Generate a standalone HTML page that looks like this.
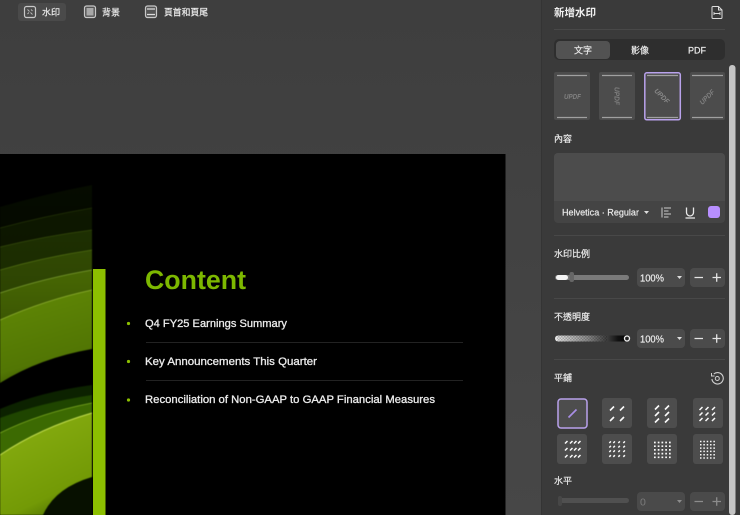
<!DOCTYPE html>
<html><head><meta charset="utf-8"><style>
html,body{margin:0;padding:0;background:#414141;width:740px;height:515px;overflow:hidden}
svg{display:block;filter:blur(.35px)}
svg svg{filter:blur(.5px)}
text{font-family:"Liberation Sans","Noto Sans CJK TC",sans-serif;fill:#ececec;stroke:#ececec;stroke-width:.18}
</style></head><body>
<svg width="740" height="515" viewBox="0 0 740 515" xmlns="http://www.w3.org/2000/svg">
<defs>
<linearGradient id="bgG" x1="0" y1="0" x2="0" y2="1"><stop offset="0" stop-color="#3e3e3e"/><stop offset="1" stop-color="#474747"/></linearGradient>
<linearGradient id="op" x1="0" y1="0" x2="1" y2="0"><stop offset="0" stop-color="#e8e8e8"/><stop offset=".45" stop-color="#8a8a8a"/><stop offset=".85" stop-color="#111"/><stop offset="1" stop-color="#000"/></linearGradient>
<linearGradient id="u1" x1="0" y1="0" x2="0" y2="1"><stop offset="0" stop-color="#060c00"/><stop offset="1" stop-color="#020300"/></linearGradient>
<linearGradient id="u2" x1="0" y1="0" x2="0" y2="1"><stop offset="0" stop-color="#0e1800"/><stop offset="1" stop-color="#0a1200"/></linearGradient>
<linearGradient id="u3" x1="0" y1="0" x2="0" y2="1"><stop offset="0" stop-color="#1e3002"/><stop offset="1" stop-color="#162400"/></linearGradient>
<linearGradient id="u4" x1="0" y1="0" x2="0" y2="1"><stop offset="0" stop-color="#324a04"/><stop offset="1" stop-color="#263a00"/></linearGradient>
<linearGradient id="u5" x1="0" y1="0" x2="0" y2="1"><stop offset="0" stop-color="#486804"/><stop offset="1" stop-color="#364f02"/></linearGradient>
<linearGradient id="u6" gradientUnits="userSpaceOnUse" x1="30" y1="295" x2="55" y2="380"><stop offset="0" stop-color="#5f8606"/><stop offset=".75" stop-color="#527604"/><stop offset="1" stop-color="#3a5402"/></linearGradient>
<linearGradient id="l4" gradientUnits="userSpaceOnUse" x1="30" y1="420" x2="75" y2="512"><stop offset="0" stop-color="#86ac10"/><stop offset=".75" stop-color="#739a06"/><stop offset="1" stop-color="#4c6e02"/></linearGradient>
<pattern id="chk" width="3" height="3" patternUnits="userSpaceOnUse"><rect width="1.500" height="1.500" fill="#000"/><rect x="1.500" y="1.500" width="1.500" height="1.500" fill="#000"/></pattern>
</defs>

<rect width="740" height="515" fill="url(#bgG)"/>

<!-- toolbar -->
<rect x="18" y="3" width="48" height="18" rx="3" fill="#4a4a4a"/>
<rect x="24.500" y="6.500" width="11" height="11" rx="2" fill="#4a4a4a" stroke="#c8c8c8" stroke-width="1.200"/>
<path d="M27.500 9.500l2 2M31 9.500l1.500 1.500M27.500 14l1.500-1.500M30.500 12.500l2 2" stroke="#bbb" stroke-width=".9" fill="none"/>
<text x="42" y="15.500" font-size="9" textLength="18" lengthAdjust="spacingAndGlyphs">水印</text>
<rect x="84.500" y="6" width="11" height="11.500" rx="2" fill="#555" stroke="#c8c8c8" stroke-width="1.200"/>
<rect x="86.500" y="8" width="7" height="7.500" fill="#a8a8a8"/>
<text x="102" y="15.500" font-size="9" textLength="18" lengthAdjust="spacingAndGlyphs">背景</text>
<rect x="145.500" y="6" width="11" height="11.500" rx="2" fill="#555" stroke="#c8c8c8" stroke-width="1.200"/>
<path d="M147 9h8M147 14.500h8" stroke="#ddd" stroke-width="1.300"/>
<text x="164" y="15.500" font-size="9" textLength="44" lengthAdjust="spacingAndGlyphs">頁首和頁尾</text>

<!-- slide -->
<rect x="0" y="154" width="505.500" height="361" fill="#000"/>
<!-- artwork -->
<svg x="0" y="154" width="92" height="361" viewBox="0 154 92 361">
<path d="M0 207Q45 194 92 185V340H0Z" fill="url(#u1)"/>
<path d="M0 228Q45 216 92 208V340H0Z" fill="url(#u2)"/>
<path d="M0 247Q45 236 92 230V340H0Z" fill="url(#u3)"/>
<path d="M0 270Q45 257 92 250V345H0Z" fill="url(#u4)"/>
<path d="M0 293Q45 278 92 270V345H0Z" fill="url(#u5)"/>
<path d="M0 320Q45 300 92 290V349Q40 358 0 383Z" fill="url(#u6)"/>
<path d="M0 293Q45 278 92 270" fill="none" stroke="#7a9c30" stroke-width=".7"/>
<path d="M0 320Q45 300 92 290" fill="none" stroke="#8fb030" stroke-width=".8"/>
<path d="M0 270Q45 257 92 250" fill="none" stroke="#5f7e18" stroke-width=".6"/>
<path d="M0 247Q45 236 92 230" fill="none" stroke="#425a10" stroke-width=".6"/>
<path d="M0 228Q45 216 92 208" fill="none" stroke="#2e400a" stroke-width=".6"/>
<path d="M0 409Q40 392 92 385V515H0Z" fill="#0c2200"/>
<path d="M0 418Q40 403 92 395V515H0Z" fill="#1f4500"/>
<path d="M0 433Q40 413 92 403V515H0Z" fill="#3c6a02"/>
<path d="M0 455Q40 428 92 413V477Q55 488 43 515H0Z" fill="url(#l4)"/>
<path d="M0 455Q40 428 92 413" fill="none" stroke="#c4de50" stroke-width="1"/>
<path d="M0 433Q40 413 92 403" fill="none" stroke="#7ca820" stroke-width=".7"/>
<path d="M43 515Q55 488 92 477V515Z" fill="#071000"/>
</svg>
<rect x="93" y="269" width="12.500" height="246" fill="#8cbf00"/>

<text x="145" y="289" font-size="26.500" font-weight="700" style="fill:#7db800;stroke:none" textLength="101" lengthAdjust="spacingAndGlyphs">Content</text>
<circle cx="128.500" cy="323.500" r="1.600" fill="#8cbf00"/>
<circle cx="128.500" cy="361.500" r="1.600" fill="#8cbf00"/>
<circle cx="128.500" cy="400" r="1.600" fill="#8cbf00"/>
<g style="font-weight:400">
<text x="145" y="327" font-size="11" textLength="142" lengthAdjust="spacingAndGlyphs" style="stroke-width:.3">Q4 FY25 Earnings Summary</text>
<text x="145" y="365" font-size="11" textLength="172" lengthAdjust="spacingAndGlyphs" style="stroke-width:.3">Key Announcements This Quarter</text>
<text x="145" y="403" font-size="11" textLength="290" lengthAdjust="spacingAndGlyphs" style="stroke-width:.3">Reconciliation of Non-GAAP to GAAP Financial Measures</text>
</g>
<rect x="146" y="342" width="317" height="1" fill="#222"/>
<rect x="146" y="380" width="317" height="1" fill="#222"/>

<!-- panel -->
<rect x="541" y="0" width="199" height="515" fill="#3a3a3a"/>
<rect x="541" y="0" width="1" height="515" fill="#343434"/>
<text x="554" y="16" font-size="10.500" font-weight="700" style="fill:#f0f0f0;stroke:none" textLength="42" lengthAdjust="spacingAndGlyphs">新增水印</text>
<path d="M713 6.500h5.500l3.500 3.500v7.500a1 1 0 0 1-1 1h-8a1 1 0 0 1-1-1v-10a1 1 0 0 1 1-1zM718.500 6.500v3.500h3.500" fill="none" stroke="#ddd" stroke-width="1"/>
<path d="M714 13.500h6M714 12v3M720 12v3" stroke="#ddd" stroke-width=".9" fill="none"/>
<rect x="554" y="29" width="171" height="1" fill="#484848"/>

<rect x="554" y="39" width="171" height="21" rx="5" fill="#2e2e2e"/>
<rect x="556" y="41" width="54" height="18" rx="4" fill="#525252"/>
<text x="574" y="53.500" font-size="9" textLength="18" lengthAdjust="spacingAndGlyphs">文字</text>
<text x="631" y="53.500" font-size="9" textLength="18" lengthAdjust="spacingAndGlyphs">影像</text>
<text x="688" y="53.500" font-size="9" textLength="18" lengthAdjust="spacingAndGlyphs">PDF</text>

<!-- thumbnails -->
<g fill="#4c4c4c">
<rect x="554" y="72" width="36" height="48" rx="2"/>
<rect x="599" y="72" width="36" height="48" rx="2"/>
<rect x="690" y="72" width="35" height="48" rx="2"/>
</g>
<rect x="644.800" y="72.800" width="35.500" height="47" rx="2" fill="#4c4c4c" stroke="#b9a2ec" stroke-width="1.500"/>
<path d="M557 75.500h30M557 117.500h30M602 75.500h30M602 117.500h30M647 75.500h31M647 117.500h31M692 75.500h31M692 117.500h31" stroke="#a0a0a0" stroke-width="1.200"/>
<g font-size="7" font-style="italic" font-weight="700" opacity=".55">
<text x="564" y="99" textLength="17" lengthAdjust="spacingAndGlyphs" style="fill:#aaa;stroke:none">UPDF</text>
<text transform="translate(617 96) rotate(90)" x="-9" y="2.500" textLength="18" lengthAdjust="spacingAndGlyphs" style="fill:#aaa;stroke:none">UPDF</text>
<text transform="translate(662 96) rotate(45)" x="-9" y="2.500" textLength="18" lengthAdjust="spacingAndGlyphs" style="fill:#bbb;stroke:none">UPDF</text>
<text transform="translate(707 97) rotate(-45)" x="-9" y="2.500" textLength="18" lengthAdjust="spacingAndGlyphs" style="fill:#aaa;stroke:none">UPDF</text>
</g>

<!-- content -->
<text x="554" y="142" font-size="9" textLength="18" lengthAdjust="spacingAndGlyphs">內容</text>
<rect x="554" y="153" width="171" height="70" rx="4" fill="#444"/>
<path d="M554 201v-44a4 4 0 0 1 4-4h163a4 4 0 0 1 4 4v44z" fill="#4c4c4c"/>
<text x="562" y="215.500" font-size="9.500" textLength="77" lengthAdjust="spacingAndGlyphs">Helvetica · Regular</text>
<path d="M644 211h5l-2.500 3z" fill="#ddd"/>
<path d="M662 207.500v10M664 208h7M664 211h4.500M664 214h7M664 217h4.500" stroke="#ccc" stroke-width="1" fill="none"/>
<path d="M686.500 207.500v5a3.500 3.500 0 0 0 7 0v-5M685.500 218h9.500" stroke="#e8e8e8" stroke-width="1.300" fill="none"/>
<rect x="708" y="206" width="12" height="12" rx="3" fill="#b88fff"/>
<rect x="554" y="235" width="171" height="1" fill="#484848"/>

<!-- scale -->
<text x="554" y="257" font-size="9" textLength="36" lengthAdjust="spacingAndGlyphs">水印比例</text>
<rect x="555" y="275" width="74" height="5" rx="2.500" fill="#7a7a7a"/>
<rect x="556" y="275" width="12" height="5" rx="2.500" fill="#f4f4f4"/>
<rect x="569.500" y="272" width="4.500" height="10" rx="2" fill="#666"/>
<rect x="637" y="268" width="48" height="19" rx="4" fill="#4b4b4b"/>
<text x="640" y="281.500" font-size="10.500" textLength="24" lengthAdjust="spacingAndGlyphs">100%</text>
<path d="M677 276h5l-2.500 3z" fill="#ddd"/>
<rect x="690" y="268" width="35" height="19" rx="4" fill="#4b4b4b"/>
<path d="M694.500 277.500h8.500M712.500 277.500h8.500M716.700 273.300v8.500" stroke="#e4e4e4" stroke-width="1.300"/>
<rect x="554" y="298" width="171" height="1" fill="#484848"/>

<!-- opacity -->
<text x="554" y="320" font-size="9" textLength="36" lengthAdjust="spacingAndGlyphs">不透明度</text>
<rect x="555" y="335.500" width="74" height="6" rx="3" fill="url(#op)"/>
<rect x="557" y="335.500" width="50" height="6" fill="url(#chk)" opacity=".22"/>
<circle cx="627" cy="338.500" r="2.500" fill="#222" stroke="#f0f0f0" stroke-width="1.300"/>
<rect x="637" y="329" width="48" height="19" rx="4" fill="#4b4b4b"/>
<text x="640" y="342.500" font-size="10.500" textLength="24" lengthAdjust="spacingAndGlyphs">100%</text>
<path d="M677 337h5l-2.500 3z" fill="#ddd"/>
<rect x="690" y="329" width="35" height="19" rx="4" fill="#4b4b4b"/>
<path d="M694.500 338.500h8.500M712.500 338.500h8.500M716.700 334.300v8.500" stroke="#e4e4e4" stroke-width="1.300"/>
<rect x="554" y="359" width="171" height="1" fill="#484848"/>

<!-- tile -->
<text x="554" y="381" font-size="9" textLength="18" lengthAdjust="spacingAndGlyphs">平鋪</text>
<path d="M713.800 374a5.700 5.700 0 1 1-1.900 5" fill="none" stroke="#d0d0d0" stroke-width="1.100"/>
<path d="M711.500 373v3h3" fill="none" stroke="#d0d0d0" stroke-width="1"/>
<circle cx="717.300" cy="378.500" r="2" fill="none" stroke="#d0d0d0" stroke-width="1"/>

<g fill="#4d4d4d">
<rect x="602" y="398" width="30" height="30" rx="3"/>
<rect x="647" y="398" width="30" height="30" rx="3"/>
<rect x="693" y="398" width="30" height="30" rx="3"/>
<rect x="557" y="434" width="30" height="30" rx="3"/>
<rect x="602" y="434" width="30" height="30" rx="3"/>
<rect x="647" y="434" width="30" height="30" rx="3"/>
<rect x="693" y="434" width="30" height="30" rx="3"/>
</g>
<rect x="558" y="399" width="29" height="29" rx="3" fill="#4d4d4d" stroke="#b9a2ec" stroke-width="1.500"/>
<path d="M568.500 417.500l8-8" stroke="#a98ee6" stroke-width="1.700"/>
<g stroke="#fafafa" fill="none" stroke-width="1.600">
<path d="M610 410.500l4-4M620 410.500l4-4M610 421l4-4M620 421l4-4"/>
<path d="M655 409.500l4-4M665 409.500l4-4M655 416l4-4M665 416l4-4M655 422.500l4-4M665 422.500l4-4"/>
</g>
<g stroke="#fafafa" fill="none" stroke-width="1.500">
<path d="M699.500 410l3-3M705.500 410l3-3M712 410l3-3M699.500 415.500l3-3M705.500 415.500l3-3M712 415.500l3-3M699.500 421l3-3M705.500 421l3-3M712 421l3-3"/>
<path d="M565 443.500l2.500-2.500M570 443.500l2.500-2.500M574 443.500l2.500-2.500M578 443.500l2.500-2.500M565 450.500l2.500-2.500M570 450.500l2.500-2.500M574 450.500l2.500-2.500M578 450.500l2.500-2.500M565 457.500l2.500-2.500M570 457.500l2.500-2.500M574 457.500l2.500-2.500M578 457.500l2.500-2.500"/>
<path d="M609.300 443l1.600-1.600M613.300 443l1.600-1.600M618.300 443l1.600-1.600M623.300 443l1.600-1.600M609.300 447.500l1.600-1.600M613.300 447.500l1.600-1.600M618.300 447.500l1.600-1.600M623.300 447.500l1.600-1.600M609.300 452l1.600-1.600M613.300 452l1.600-1.600M618.300 452l1.600-1.600M623.300 452l1.600-1.600M609.300 456.800l1.600-1.600M613.300 456.800l1.600-1.600M618.300 456.800l1.600-1.600M623.300 456.800l1.600-1.600"/>
</g>
<g stroke="#fafafa" fill="none" stroke-width="1.700" stroke-dasharray="1.700 2.050">
<path d="M654 442.500h17.500M654 446.200h17.500M654 449.900h17.500M654 453.600h17.500M654 457.300h17.500"/>
</g>
<g stroke="#fafafa" fill="none" stroke-width="1.500" stroke-dasharray="1.500 1.850">
<path d="M700 441.500h16M700 444.800h16M700 448.100h16M700 451.400h16M700 454.700h16M700 458h16"/>
</g>

<!-- horizontal -->
<text x="554" y="484" font-size="9" textLength="18" lengthAdjust="spacingAndGlyphs">水平</text>
<g opacity=".5">
<rect x="560" y="498" width="69" height="5" rx="2.500" fill="#666"/>
<rect x="558" y="496" width="4" height="10" rx="2" fill="#555"/>
<rect x="637" y="492" width="48" height="19" rx="4" fill="#5a5a5a"/>
<text x="640" y="505.500" font-size="10.500" style="fill:#bbb;stroke:none">0</text>
<path d="M677 500h5l-2.500 3z" fill="#ddd"/>
<rect x="690" y="492" width="35" height="19" rx="4" fill="#5a5a5a"/>
<path d="M694.500 501.500h8.500M712.500 501.500h8.500M716.700 497.300v8.500" stroke="#ddd" stroke-width="1.300"/>
</g>

<!-- scrollbar -->
<rect x="728" y="62" width="12" height="453" fill="#3a3a3a"/>
<rect x="729" y="65" width="6.500" height="450" rx="3" fill="#c4c4c4"/>
</svg>
</body></html>
